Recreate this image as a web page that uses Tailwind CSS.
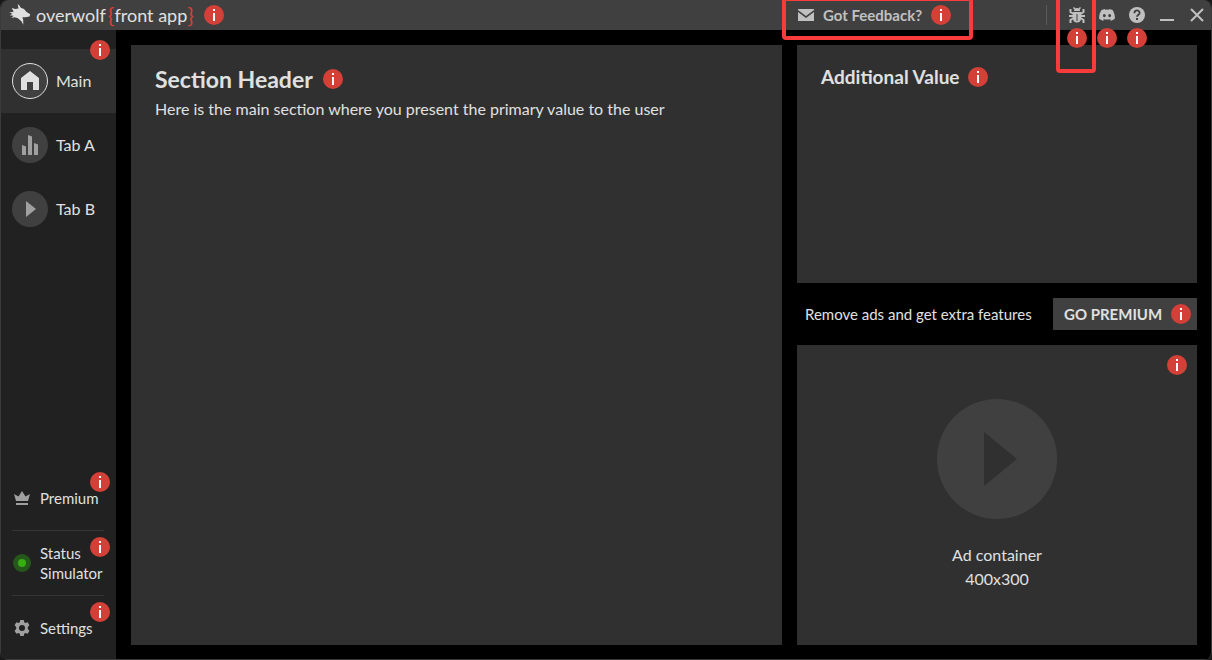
<!DOCTYPE html>
<html lang="en">
<head>
<meta charset="utf-8">
<meta name="viewport" content="width=device-width, initial-scale=1">
<title>overwolf {front app}</title>
<script src="https://cdn.jsdelivr.net/npm/@tailwindcss/browser@4"></script>
</head>
<body class="bg-[#191919] font-['Lato','Open_Sans',sans-serif] text-[#e0e0e0]">
<svg class="hidden" aria-hidden="true">
  <symbol id="info" viewBox="0 0 20 20">
    <circle cx="10" cy="10" r="10" fill="#d34037"/>
    <path fill="#fff" d="M9 4h2v2H9zM9 8h2v8H9z"/>
  </symbol>
</svg>
<div class="flex h-screen flex-col overflow-hidden rounded-lg border-x border-[#3a3a3a] bg-black">
  <header class="flex h-[30px] shrink-0 items-center bg-[#404040] pl-2">
    <svg class="h-[22px] w-6 shrink-0" viewBox="0 0 24 22" fill="#e0e0e0" aria-hidden="true">
      <path d="M8.700 0 10.400 1.600 11.800 3.700 15 5 17.600 8 21.200 10.300 20.500 12.600 16.300 13.200 13.400 13.200 14.200 16 14.300 20.800 12.200 17 8.500 14 5.500 13.200 2.500 14 4.600 11.700 .800 11.300 3.500 9.800 .300 8.500 4.700 7.700 2.700 4 6.200 5 9.500 4.500z"/>
    </svg>
    <h1 class="ml-[3px] flex items-center text-lg leading-5 whitespace-nowrap">
      <span>overwolf</span><span class="ml-0.5 text-[22px] leading-5 text-[#d34037]">{</span><span>front app</span><span class="text-[22px] leading-5 text-[#d34037]">}</span>
    </h1>
    <svg class="ml-2.5 size-5 shrink-0"><use href="#info"/></svg>
    <div class="ml-auto flex h-full w-[414px] shrink-0 items-center">
      <button class="relative flex h-full items-center text-[15px] font-bold text-[#c0c0c0]">
        <svg class="ml-px mr-[9px] h-3 w-4" viewBox="0 0 16 12" fill="#c0c0c0" aria-hidden="true"><path d="M0 0h16v1L8 7 0 1zM0 3l8 6 8-6v9H0z"/></svg>
        Got Feedback?
        <svg class="ml-[9px] size-5"><use href="#info"/></svg>
        <span class="pointer-events-none absolute -top-[3px] -right-[22px] -bottom-[10px] -left-[15px] z-10 rounded border-4 border-[#f83c3c]"></span>
      </button>
      <span class="ml-auto h-5 w-px bg-[#5c5c5c]"></span>
      <div class="ml-4 flex h-full gap-0.5">
        <button aria-label="Report a bug" class="relative flex w-7 items-center justify-center">
          <svg class="size-4" viewBox="0 0 16 16" fill="none" stroke="#c0c0c0" aria-hidden="true">
            <path fill="#c0c0c0" stroke="none" d="M5 4a3 3 0 0 1 6 0zM4 5h8v6.500a4 4 0 0 1-8 0z"/>
            <path stroke-width="2" d="M1.500 2v3L4.500 7M14.500 2v3L11.500 7M0 9h4M12 9h4M4.500 11l-3 2v3M11.500 11l3 2v3"/>
            <path stroke-width="1.500" d="M6 2 4.500 .500M10 2l1.500-1.500"/>
            <path stroke="#404040" d="M8 7v7"/>
          </svg>
          <svg class="absolute top-7 left-1 size-5"><use href="#info"/></svg>
          <span class="pointer-events-none absolute -top-1 -right-[5px] -bottom-[43px] -left-[7px] z-10 rounded border-4 border-[#f83c3c]"></span>
        </button>
        <button aria-label="Discord" class="relative flex w-7 items-center justify-center">
          <svg class="size-4" viewBox="0 0 16 16" fill="#c0c0c0" aria-hidden="true"><path fill-rule="evenodd" d="M13.545 2.907a13.200 13.200 0 0 0-3.257-1.011c-.141.250-.305.590-.418.850a12.200 12.200 0 0 0-3.658 0 8 8 0 0 0-.412-.850 13.200 13.200 0 0 0-3.257 1.011C.483 5.930-.076 8.902.203 11.831a13.300 13.300 0 0 0 3.995 2.020l.856-1.330c-.430-.160-.850-.360-1.250-.600l.250-.200c2.500 1.150 5.350 1.150 7.890 0l.250.200c-.400.240-.820.440-1.260.600l.860 1.330a13.200 13.200 0 0 0 4.001-2.020c.328-3.396-.560-6.342-2.250-8.924zM5.347 10.200c-.789 0-1.438-.724-1.438-1.612s.637-1.613 1.438-1.613c.807 0 1.450.730 1.438 1.613 0 .888-.637 1.612-1.438 1.612zm5.316 0c-.788 0-1.438-.724-1.438-1.612s.637-1.613 1.438-1.613c.807 0 1.451.730 1.438 1.613 0 .888-.631 1.612-1.438 1.612z"/></svg>
          <svg class="absolute top-7 left-1 size-5"><use href="#info"/></svg>
        </button>
        <button aria-label="Help" class="relative flex w-7 items-center justify-center">
          <svg class="size-4" viewBox="0 0 16 16" aria-hidden="true"><circle cx="8" cy="8" r="8" fill="#c0c0c0"/><path fill="none" stroke="#404040" stroke-width="1.800" d="M5.400 6.300C5.400 2.500 10.600 2.700 10.600 5.900 10.600 7.700 8 7.700 8 9.800"/><path fill="#404040" d="M7 11h2v2H7z"/></svg>
          <svg class="absolute top-7 left-1 size-5"><use href="#info"/></svg>
        </button>
        <button aria-label="Minimize" class="flex w-7 items-center justify-center">
          <svg class="size-4" viewBox="0 0 16 16" aria-hidden="true"><path fill="#c0c0c0" d="M1 12h14v2H1z"/></svg>
        </button>
        <button aria-label="Close" class="flex w-7 items-center justify-center">
          <svg class="size-4" viewBox="0 0 16 16" aria-hidden="true"><path stroke="#c0c0c0" stroke-width="2" d="m2 2 12 12M14 2 2 14"/></svg>
        </button>
      </div>
    </div>
  </header>

  <div class="flex min-h-0 flex-1">
    <nav class="flex w-[115px] shrink-0 flex-col border-b border-[#3a3a3a] bg-[#212121] pt-[19px]">
      <button class="relative flex h-16 items-center gap-2 bg-[#303030] pl-[11px] text-base">
        <svg class="size-9" viewBox="0 0 36 36" aria-hidden="true"><circle cx="18" cy="18" r="17.500" fill="#404040" stroke="#e0e0e0"/><path fill="#e0e0e0" d="m18 8 9 7v12h-6v-8h-6v8H9V15z"/></svg>
        Main
        <svg class="absolute -top-[9px] right-[6px] size-5"><use href="#info"/></svg>
      </button>
      <button class="flex h-16 items-center gap-2 pl-[11px] text-base">
        <svg class="size-9" viewBox="0 0 36 36" aria-hidden="true"><circle cx="18" cy="18" r="18" fill="#404040"/><path fill="#a0a0a0" d="m10 18 4 1.500V28h-4zM16 8l4 1.500V28h-4zM22 16l4 1.500V28h-4z"/></svg>
        Tab A
      </button>
      <button class="flex h-16 items-center gap-2 pl-[11px] text-base">
        <svg class="size-9" viewBox="0 0 36 36" aria-hidden="true"><circle cx="18" cy="18" r="18" fill="#404040"/><path fill="#a0a0a0" d="m14 10 10 8-10 8z"/></svg>
        Tab B
      </button>
      <div class="mt-auto -mb-px text-[15px] leading-5">
        <button class="relative flex h-16 w-full items-center pl-3 text-left">
          <svg class="mr-[9px] h-4 w-[18px]" viewBox="0 0 16 16" fill="#a0a0a0" aria-hidden="true"><path d="M2 11 0 4l4.500 2.500L8 1l3.500 5.500L16 4l-2 7zM2 13h12v2H2z"/></svg>
          Premium
          <svg class="absolute top-1.5 right-[6px] size-5"><use href="#info"/></svg>
        </button>
        <hr class="mr-3 ml-[11px] border-[#353535]">
        <button class="relative flex h-16 w-full items-center pl-3 text-left">
          <svg class="mr-[9px] size-[18px]" viewBox="0 0 18 18" aria-hidden="true"><circle cx="9" cy="9" r="9" fill="#27581b"/><circle cx="9" cy="9" r="4" fill="#35ad13"/></svg>
          <span>Status<br>Simulator</span>
          <svg class="absolute top-1.5 right-[6px] size-5"><use href="#info"/></svg>
        </button>
        <hr class="mr-3 ml-[11px] border-[#353535]">
        <button class="relative flex h-16 w-full items-center pl-3 text-left">
          <svg class="mr-[9px] h-4 w-[18px]" viewBox="0 0 16 16" aria-hidden="true"><path fill="#a0a0a0" fill-rule="evenodd" d="M6.300 0h3.400l.5 2.200 1.300.8 2.200-.7 1.700 3L13.800 7v2l1.600 1.700-1.700 3-2.200-.7-1.300.8-.5 2.200H6.300l-.5-2.200-1.300-.8-2.200.7-1.700-3L2.200 9V7L.600 5.300l1.700-3 2.200.7 1.300-.8zM8 5a3 3 0 1 0 0 6 3 3 0 0 0 0-6z"/></svg>
          Settings
          <svg class="absolute top-1.5 right-[6px] size-5"><use href="#info"/></svg>
        </button>
      </div>
    </nav>

    <main class="flex min-w-0 flex-1 gap-[15px] border-b border-[#3a3a3a] pt-[15px] pr-[14px] pb-[14px] pl-[15px]">
      <section class="min-w-0 flex-1 bg-[#303030] px-6 pt-5">
        <div class="flex items-center gap-2.5">
          <h2 class="text-[23px] leading-7 font-bold">Section Header</h2>
          <svg class="size-5"><use href="#info"/></svg>
        </div>
        <p class="mt-1 text-base leading-6">Here is the main section where you present the primary value to the user</p>
      </section>
      <aside class="flex w-[400px] shrink-0 flex-col gap-[15px]">
        <section class="flex-1 bg-[#303030] px-6 pt-5">
          <div class="flex items-center gap-2">
            <h2 class="text-[19px] leading-6 font-bold">Additional Value</h2>
            <svg class="size-5"><use href="#info"/></svg>
          </div>
        </section>
        <div class="flex h-8 items-center justify-between pl-2 text-[15px]">
          <p>Remove ads and get extra features</p>
          <button class="flex h-8 w-36 items-center justify-between bg-[#404040] pr-1.5 pl-[11px] font-bold">GO PREMIUM
            <svg class="size-5"><use href="#info"/></svg>
          </button>
        </div>
        <section class="relative flex h-[300px] flex-col items-center bg-[#303030] pt-[54px] text-center">
          <svg class="size-[120px]" viewBox="0 0 120 120" aria-hidden="true"><circle cx="60" cy="60" r="60" fill="#404040"/><path fill="#303030" d="m47 33 33 27-33 27z"/></svg>
          <p class="mt-6 text-base leading-6">Ad container<br>400x300</p>
          <svg class="absolute top-2.5 right-2.5 size-5"><use href="#info"/></svg>
        </section>
      </aside>
    </main>
  </div>
</div>
</body>
</html>
